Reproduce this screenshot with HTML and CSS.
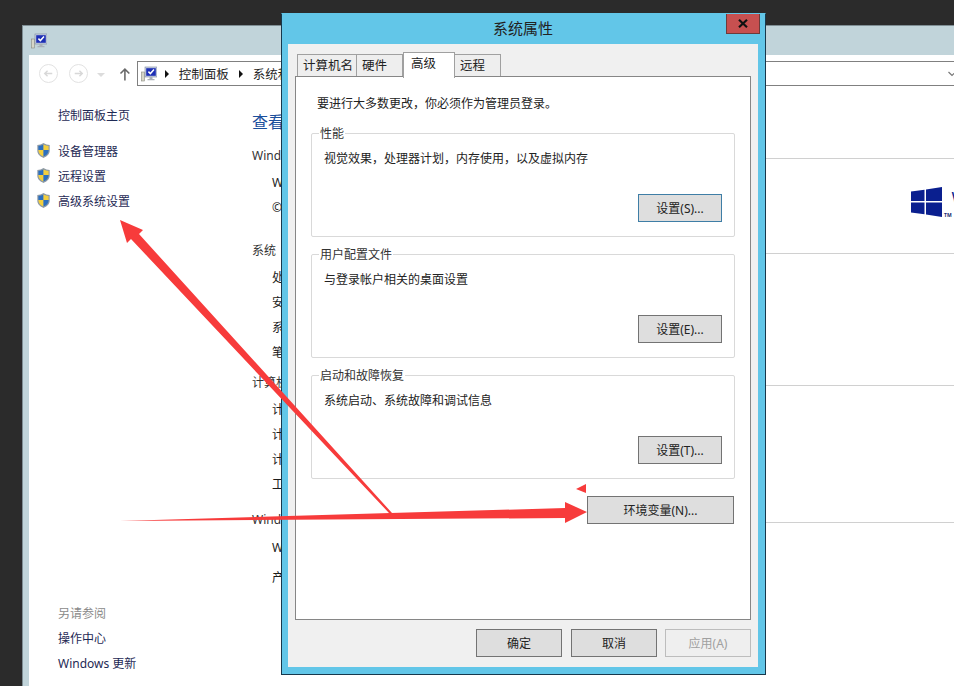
FILE: index.html
```html
<!DOCTYPE html>
<html lang="zh-CN">
<head>
<meta charset="utf-8">
<title>系统属性</title>
<link rel="stylesheet" href="styles.css">
</head>
<body>
<svg width="0" height="0" class="defs">
  <defs>
    <symbol id="pc" viewBox="0 0 16 16">
      <rect x="0.5" y="6" width="3" height="9" fill="#d6d6c8" stroke="#8a8a80" stroke-width="0.6"/>
      <rect x="4" y="1" width="12" height="10" fill="#c9d3e6" stroke="#7c869c" stroke-width="0.6"/>
      <rect x="5.2" y="2.2" width="9.6" height="7.6" fill="#1d2fb5"/>
      <path d="M7.4 5.6l2 2 3.6-4" fill="none" stroke="#fff" stroke-width="1.5"/>
      <path d="M8.5 11h3v2h2v1.2h-7V13h2z" fill="#a9afb8"/>
    </symbol>
    <symbol id="shield" viewBox="0 0 16 17">
      <path d="M8 .6C6 2 3.6 2.6 1.4 2.6v6.2c0 3.6 3 6.2 6.6 7.6 3.600-1.400 6.600-4 6.600-7.600V2.600C12.400 2.600 10 2 8 .6z" fill="#8e9aa6"/>
      <path d="M8 2v6H2.600V3.600C4.600 3.500 6.400 3 8 2z" fill="#2a6fc0"/>
      <path d="M8 2c1.600 1 3.400 1.500 5.400 1.600V8H8z" fill="#f3cf3d"/>
      <path d="M2.600 8H8v7C5 13.800 2.700 11.600 2.600 8.800z" fill="#f3cf3d"/>
      <path d="M8 8h5.400v.8C13.300 11.600 11 13.800 8 15z" fill="#2a6fc0"/>
    </symbol>
  </defs>
</svg>

<main class="desktop">
  <section class="window">
    <header class="titlebar">
      <svg class="title-icon"><use href="#pc"/></svg>
    </header>
    <div class="client">
      <nav class="toolbar">
        <span class="nav-round">
          <svg viewBox="0 0 18 18"><path d="M13 9H5M8 6L5 9l3 3" fill="none" stroke="#d8d8d8" stroke-width="1.500"/></svg>
        </span>
        <span class="nav-round">
          <svg viewBox="0 0 18 18"><path d="M5 9h8M10 6l3 3-3 3" fill="none" stroke="#d8d8d8" stroke-width="1.500"/></svg>
        </span>
        <span class="nav-drop"></span>
        <svg class="nav-up" viewBox="0 0 12 14"><path d="M6 13.500V2M1.500 6.500L6 2l4.500 4.500" fill="none" stroke="#6a6a6a" stroke-width="1.600"/></svg>
        <div class="address">
          <svg class="addr-icon"><use href="#pc"/></svg>
          <span class="crumb-arrow"></span>
          <span class="crumb">控制面板</span>
          <span class="crumb-arrow"></span>
          <span class="crumb">系统和安全</span>
          <svg class="addr-chevron" viewBox="0 0 8 6"><path d="M0.500 1L4 4.500 7.500 1" fill="none" stroke="#777" stroke-width="1.200"/></svg>
        </div>
      </nav>
      <div class="columns">
        <aside class="sidebar">
          <a class="side-home">控制面板主页</a>
          <ul class="side-tasks">
            <li><svg class="shield"><use href="#shield"/></svg>设备管理器</li>
            <li><svg class="shield"><use href="#shield"/></svg>远程设置</li>
            <li><svg class="shield"><use href="#shield"/></svg>高级系统设置</li>
          </ul>
          <div class="side-also">
            <div class="also-title">另请参阅</div>
            <div class="also-link">操作中心</div>
            <div class="also-link">Windows 更新</div>
          </div>
        </aside>
        <div class="info">
          <h1 class="info-title">查看有关计算机的基本信息</h1>
          <div class="info-head"><span>Windows 版本</span><i class="rule"></i></div>
          <div class="info-split">
            <ul class="info-rows">
              <li>Windows Server 2012 R2</li>
              <li>© 2013 Microsoft</li>
            </ul>
            <div class="brand">
              <svg class="brand-logo" viewBox="0 0 32 30">
                <path d="M0 4.500L13.500 2.700V14H0zM15 2.500L31 0v14H15zM0 15.500h13.500v11.800L0 25.500zM15 15.500h16V30l-16-2.500z" fill="#0a1f8f"/>
              </svg>
              <span class="brand-tm">TM</span>
              <span class="brand-name">W</span>
            </div>
          </div>
          <div class="info-head gap-a"><span>系统</span><i class="rule"></i></div>
          <ul class="info-rows">
            <li>处理器：</li>
            <li>安装内存：</li>
            <li>系统类型：</li>
            <li>笔和触摸：</li>
          </ul>
          <div class="info-head gap-b"><span>计算机名称</span><i class="rule"></i></div>
          <ul class="info-rows">
            <li>计算机名：</li>
            <li>计算机全名：</li>
            <li>计算机描述：</li>
            <li>工作组：</li>
          </ul>
          <div class="info-head gap-c"><span>Windows 激活</span><i class="rule"></i></div>
          <ul class="info-rows wide">
            <li>Windows 已激活</li>
            <li>产品 ID：</li>
          </ul>
        </div>
      </div>
    </div>
  </section>

  <section class="dialog">
    <header class="dialog-title">
      <span>系统属性</span>
      <button class="close" aria-label="关闭">
        <svg viewBox="0 0 10 9"><path d="M1 .8l8 7.400M9 .8L1 8.200" stroke="#111" stroke-width="2.200" fill="none"/></svg>
      </button>
    </header>
    <div class="dialog-body">
      <div class="tabs">
        <span class="tab first">计算机名</span>
        <span class="tab">硬件</span>
        <span class="tab active">高级</span>
        <span class="tab last">远程</span>
      </div>
      <div class="panel">
        <p class="notice">要进行大多数更改，你必须作为管理员登录。</p>
        <div class="group">
          <span class="legend">性能</span>
          <p class="group-text">视觉效果，处理器计划，内存使用，以及虚拟内存</p>
          <button class="btn set focus">设置(S)...</button>
        </div>
        <div class="group">
          <span class="legend">用户配置文件</span>
          <p class="group-text">与登录帐户相关的桌面设置</p>
          <button class="btn set">设置(E)...</button>
        </div>
        <div class="group">
          <span class="legend">启动和故障恢复</span>
          <p class="group-text">系统启动、系统故障和调试信息</p>
          <button class="btn set">设置(T)...</button>
        </div>
        <button class="btn env">环境变量(N)...</button>
      </div>
      <footer class="dialog-foot">
        <button class="btn foot">确定</button>
        <button class="btn foot">取消</button>
        <button class="btn foot off">应用(A)</button>
      </footer>
    </div>
  </section>

  <svg class="arrows" viewBox="0 0 954 686">
    <path d="M120 521L565 508V502L587 512L565 523V518Z" fill="#f73b3b"/>
    <path d="M120 220L143 230L139 234L392 513L389 513L131 239L127 243Z" fill="#f73b3b"/>
    <path d="M576 489L586 484V493Z" fill="#f73b3b"/>
  </svg>
</main>
</body>
</html>
```

FILE: styles.css
```css
* { box-sizing: border-box; }

html, body {
  margin: 0;
  height: 100%;
  overflow: hidden;
}

body {
  background: #2b2b2b;
  color: #1c1c1c;
  font-family: "Noto Sans", "Noto Sans CJK SC", sans-serif;
  font-size: 12px;
}

ul { list-style: none; margin: 0; padding: 0; }
p { margin: 0; }

.defs { position: absolute; }

.desktop {
  position: relative;
  width: 954px;
  height: 686px;
  overflow: hidden;
}

/* background window */
.window {
  position: absolute;
  left: 22px;
  top: 25px;
  width: 932px;
  height: 661px;
  display: flex;
  flex-direction: column;
  padding-left: 6px;
  background: #c1d4da;
  border-top: 1px solid #7f8e94;
  border-left: 1px solid #7f8e94;
}

.titlebar {
  height: 29px;
  flex: none;
  display: flex;
  align-items: center;
  padding-left: 2px;
}

.title-icon { width: 16px; height: 16px; }

.client {
  flex: 1;
  min-height: 0;
  display: flex;
  flex-direction: column;
  background: #fff;
}

.toolbar {
  height: 31px;
  flex: none;
  display: flex;
  align-items: center;
  padding: 6px 0 0 10px;
}

.nav-round {
  width: 19px;
  height: 19px;
  margin-right: 11px;
  border: 1px solid #e2e2e2;
  border-radius: 50%;
  display: flex;
}

.nav-round svg { width: 17px; height: 17px; }

.nav-drop {
  width: 0;
  height: 0;
  margin: 2px 0 0 -2px;
  border: 4px solid transparent;
  border-top: 4px solid #dcdcdc;
  border-bottom: 0;
}

.nav-up {
  width: 12px;
  height: 14px;
  margin: 1px 0 0 14px;
}

.address {
  width: 830px;
  height: 25px;
  margin-left: 6px;
  display: flex;
  align-items: center;
  padding-left: 3px;
  border: 1px solid #808080;
  border-right: 0;
  white-space: nowrap;
}

.addr-icon { width: 16px; height: 16px; margin-right: 8px; }

.crumb-arrow {
  width: 0;
  height: 0;
  border-left: 4px solid #111;
  border-top: 4px solid transparent;
  border-bottom: 4px solid transparent;
}

.crumb { margin: 0 10px; color: #222; font-size: 12.5px; }

.addr-chevron {
  width: 8px;
  height: 6px;
  margin-left: auto;
  margin-right: -2px;
}

.columns {
  flex: 1;
  min-height: 0;
  display: flex;
}

.sidebar {
  width: 223px;
  flex: none;
  display: flex;
  flex-direction: column;
  padding: 17px 0 10px 7px;
  color: #1f2a55;
}

.side-home {
  height: 25px;
  line-height: 25px;
  padding-left: 22px;
}

.side-tasks { margin-top: 10px; }

.side-tasks li {
  height: 25px;
  display: flex;
  align-items: center;
  gap: 7px;
}

.shield { width: 15px; height: 17px; flex: none; }

.side-also { margin-top: auto; padding-left: 22px; }

.also-title, .also-link { height: 25px; line-height: 25px; }
.also-title { color: #8a8a8a; }

.info {
  flex: 1;
  min-width: 0;
  padding-top: 24px;
  white-space: nowrap;
}

.info-title {
  margin: 0 0 8px;
  height: 24px;
  line-height: 24px;
  font-size: 16px;
  font-weight: 400;
  color: #1b4f9c;
}

.info-head {
  height: 25px;
  display: flex;
  align-items: center;
  gap: 8px;
  color: #333;
}

.rule {
  flex: 1;
  height: 1px;
  margin-top: 8px;
  background: #d0d0d0;
}

.gap-a { margin-top: 17px; }
.gap-b { margin-top: 4px; }
.gap-c { margin-top: 9px; }

.info-rows { padding: 3px 0 0 20px; }
.info-rows li { height: 25px; line-height: 25px; }
.info-rows.wide { padding-top: 2px; }
.info-rows.wide li { height: 30px; line-height: 30px; }

.info-split {
  display: flex;
  justify-content: space-between;
  align-items: flex-start;
}

.brand {
  width: 43px;
  display: flex;
  align-items: flex-start;
  margin-top: 20px;
}

.brand-logo { width: 32px; height: 30px; flex: none; }

.brand-tm {
  font-size: 5px;
  line-height: 5px;
  font-weight: 700;
  color: #1a2a70;
  margin: 26px 0 0 1px;
}

.brand-name {
  font-size: 17px;
  line-height: 22px;
  color: #0a1f8f;
}

/* dialog */
.dialog {
  position: absolute;
  left: 281px;
  top: 13px;
  width: 485px;
  height: 662px;
  display: flex;
  flex-direction: column;
  padding: 0 7px 7px 6px;
  background: #62c6e8;
  border: 1px solid #17384c;
  border-top-color: #62c6e8;
}

.dialog-title {
  height: 30px;
  flex: none;
  display: flex;
  align-items: center;
  justify-content: center;
  font-size: 15px;
  padding-bottom: 3px;
  color: #222;
}

.close {
  position: absolute;
  top: 0;
  right: 5px;
  width: 34px;
  height: 20px;
  padding: 0;
  background: #c75050;
  border: 1px solid #6d3b3b;
  border-top: 0;
  display: flex;
  align-items: center;
  justify-content: center;
}

.close svg { width: 10px; height: 9px; }

.dialog-body {
  flex: 1;
  min-height: 0;
  display: flex;
  flex-direction: column;
  background: #f0f0f0;
  padding: 8px 7px 0 7px;
}

.tabs {
  height: 24px;
  flex: none;
  display: flex;
  align-items: flex-end;
  padding-left: 2px;
  position: relative;
  z-index: 1;
}

.tab {
  height: 22px;
  line-height: 21px;
  padding: 0 0 0 5px;
  background: #eeeeee;
  border: 1px solid #a0a0a0;
  border-bottom: 0;
  border-left: 0;
  font-size: 12.5px;
  color: #222;
  white-space: nowrap;
}

.tab.first { border-left: 1px solid #a0a0a0; width: 60px; }
.tab.last { width: 46px; }
.tab:nth-child(2) { width: 46px; }

.tab.active {
  width: 52px;
  height: 26px;
  margin-bottom: -2px;
  padding: 0 0 0 7px;
  background: #fff;
  border-left: 1px solid #a0a0a0;
}

.panel {
  height: 544px;
  flex: none;
  display: flex;
  flex-direction: column;
  padding: 0 15px;
  background: #fff;
  border: 1px solid #868686;
}

.notice {
  height: 24px;
  line-height: 24px;
  margin: 15px 0 17px 6px;
  color: #222;
}

.group {
  position: relative;
  height: 104px;
  flex: none;
  margin: 0 0 17px;
  padding: 0 12px 14px 12px;
  display: flex;
  flex-direction: column;
  border: 1px solid #d9d9d9;
  border-radius: 2px;
}

.legend {
  position: absolute;
  top: -8px;
  left: 7px;
  padding: 0 1px;
  line-height: 16px;
  background: #fff;
  color: #333;
}

.group-text {
  margin-top: 13px;
  line-height: 24px;
  color: #222;
}

.btn {
  margin: 0;
  padding: 0;
  font-family: inherit;
  font-size: 12px;
  color: #222;
  background: #dedede;
  border: 1px solid #737373;
}

.set {
  width: 84px;
  height: 28px;
  margin-top: auto;
  align-self: flex-end;
}

.set.focus { border-color: #3f7ea6; }

.env {
  width: 147px;
  height: 28px;
  align-self: flex-end;
  margin-right: 1px;
}

.dialog-foot {
  flex: none;
  display: flex;
  justify-content: flex-end;
  gap: 9px;
  padding-top: 9px;
}

.foot { width: 86px; height: 28px; }

.foot.off {
  margin-left: -1px;
  color: #a0a0a0;
  background: #efefef;
  border-color: #bdbdbd;
}

.arrows {
  position: absolute;
  left: 0;
  top: 0;
  width: 954px;
  height: 686px;
  pointer-events: none;
}
```
